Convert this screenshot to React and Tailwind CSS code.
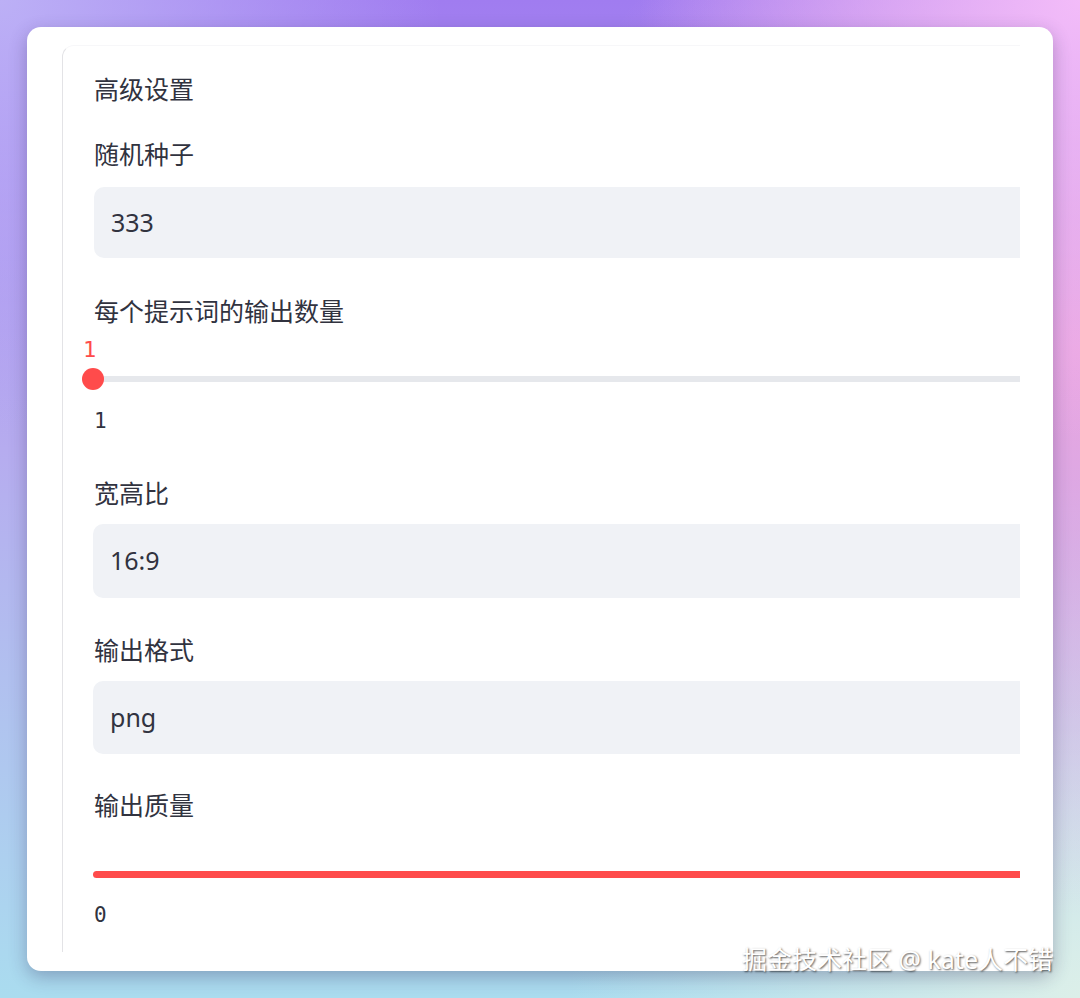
const Label = ({ children, className = "" }) => (
    <div className={`h-[34px] flex items-center text-[25px] text-[#31333f] ${className}`}>{children}</div>
);

const Field = ({ value, className = "" }) => (
    <div className={`w-[calc(100%+40px)] flex items-center pl-[17px] bg-[#f0f2f6] rounded-[10px] text-[25px] text-[#31333f] ${className}`}>
        {value}
    </div>
);

const App = () => {
    return (
        <div
            className="relative w-[1080px] h-[998px] overflow-hidden p-[27px] bg-[radial-gradient(circle_at_100%_0%,#f3bcf9_0%,rgba(243,188,249,0)_30%),radial-gradient(circle_at_100%_35%,#eaa6e0_0%,rgba(234,166,224,0)_45%),radial-gradient(circle_at_0%_0%,#bcb0f6_0%,rgba(188,176,246,0)_30%),radial-gradient(circle_at_100%_100%,#dcefe9_0%,rgba(220,239,233,0)_35%),linear-gradient(180deg,#a07cf0_0%,#b6acef_45%,#aadcef_100%)]"
            style={{ fontFamily: '"Noto Sans", "Noto Sans CJK SC", sans-serif' }}
        >
            <div className="h-[944px] bg-white rounded-[14px] shadow-[0_6px_18px_rgba(40,30,80,0.3)] pt-[18px] pl-[35px] pr-[33px]">
                <div className="h-[907px] border-l border-t border-l-[#e3e3e6] border-t-[#f7f7f9] rounded-tl-[12px] overflow-hidden pl-[31px] pt-[27px]">
                    <Label>高级设置</Label>
                    <Label className="mt-[31px]">随机种子</Label>
                    <Field value="333" className="mt-[15px] h-[71px]" />

                    <Label className="mt-[37px]">每个提示词的输出数量</Label>
                    <div className="mt-[8px] h-[24px] flex items-center -ml-[11px] text-[22px] text-[#ff4b4b]" style={{ fontFamily: '"DejaVu Sans Mono", monospace' }}>1</div>
                    <div className="relative mt-[6px] h-[24px] flex items-center -ml-[1px]">
                        <div className="w-full h-[6px] bg-[#e6e8ec] rounded-l-full" />
                        <div className="absolute left-[-11px] top-[1px] w-[22px] h-[22px] rounded-full bg-[#ff4b4b]" />
                    </div>
                    <div className="mt-[19px] h-[24px] flex items-center text-[21px] text-[#31333f]" style={{ fontFamily: '"DejaVu Sans Mono", monospace' }}>1</div>

                    <Label className="mt-[43px]">宽高比</Label>
                    <Field value="16:9" className="mt-[13px] h-[74px] -ml-[1px]" />

                    <Label className="mt-[36px]">输出格式</Label>
                    <Field value="png" className="mt-[13px] h-[73px] -ml-[1px]" />

                    <Label className="mt-[35px]">输出质量</Label>
                    <div className="mt-[44px] h-[14px] flex items-center -ml-[1px]">
                        <div className="w-full h-[7px] bg-[#ff4b4b] rounded-l-full" />
                    </div>
                    <div className="mt-[23px] h-[24px] flex items-center text-[21px] text-[#31333f]" style={{ fontFamily: '"DejaVu Sans Mono", monospace' }}>0</div>
                </div>
            </div>

            <div className="absolute right-[27px] top-[941px] text-[25px] text-white [text-shadow:1px_1px_2px_rgba(0,0,0,0.65)]">
                掘金技术社区 @ kate人不错
            </div>
        </div>
    );
};

export default App;
